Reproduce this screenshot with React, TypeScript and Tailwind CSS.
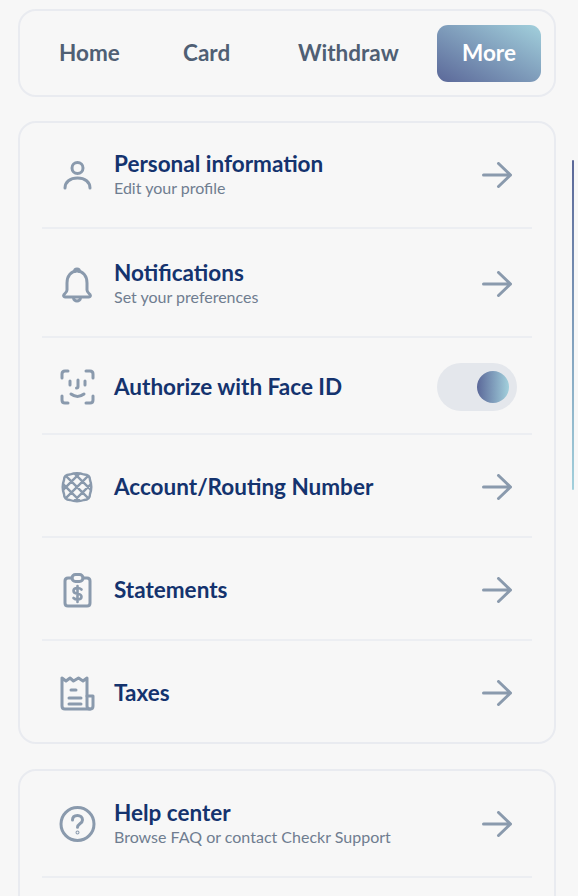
import type { ReactNode } from 'react';

const font = { fontFamily: 'Lato, "Noto Sans", sans-serif' };

function IconBox({ children }: { children: ReactNode }) {
  return (
    <svg width="40" height="40" viewBox="0 0 40 40" fill="none" stroke="#8a9aad" strokeWidth="3" strokeLinecap="round" strokeLinejoin="round">
      {children}
    </svg>
  );
}

const PersonIcon = () => (
  <IconBox>
    <circle cx="20.500" cy="13" r="5.500" />
    <path d="M8 33c0-6 5-10 12.500-10S33 27 33 33" />
  </IconBox>
);

const BellIcon = () => (
  <IconBox>
    <path d="M17.500 7.500c0-3.500 5-3.500 5 0" />
    <path d="M10 26V19c0-7 4-12 10-12s10 5 10 12v7c0 2 1.500 3 3 4.500 1 1.500 0 2.500-1 2.500H8c-1 0-2-1-1-2.500 1.500-1.500 3-2.500 3-4.500z" />
    <path d="M16.500 33.500c0 4.500 7 4.500 7 0" />
  </IconBox>
);

const FaceIcon = () => (
  <IconBox>
    <path d="M5 11V7c0-2 1-3 3-3h3M29 4h4c2 0 3 1 3 3v4M36 29v4c0 2-1 3-3 3h-4M11 36H8c-2 0-3-1-3-3v-4" />
    <path d="M13 14v4M28 14v4M21 13v6.500c0 1-.5 1.500-1.500 1.500" />
    <path d="M14 27c4 3 9 3 13 0" />
  </IconBox>
);

const gridOutline = 'M13 7.500c4-1.500 10-1.500 14 0 4 0 6 2 6 5.500 1.500 4 1.500 10 0 14 0 4-2 6-6 6-4 1.500-10 1.500-14 0-4 0-6-2-6-6-1.500-4-1.500-10 0-14 0-3.500 2-5.500 6-5.500z';

const GridIcon = () => (
  <svg width="40" height="40" viewBox="0 0 40 40" fill="none" stroke="#8a9aad" strokeWidth="2.400" strokeLinecap="round" strokeLinejoin="round">
    <defs>
      <clipPath id="grid-clip">
        <path d={gridOutline} />
      </clipPath>
    </defs>
    <path d={gridOutline} />
    <g clipPath="url(#grid-clip)">
      <path d="M0 0 40 40M11 0l29 29M0 11l29 29M40 0 0 40M29 0 0 29M40 11 11 40" />
    </g>
  </svg>
);

const StatementIcon = () => (
  <IconBox>
    <path d="M15 8h-4c-2 0-3 1-3 3v22c0 2 1 3 3 3h19c2 0 3-1 3-3V11c0-2-1-3-3-3h-4" />
    <rect x="15" y="4.500" width="11" height="7" rx="3.500" />
    <path d="M24.500 19.500c-1-1-2.500-1.500-4-1.500-2.500 0-4 1-4 2.800s1.500 2.700 4 3 4 1.200 4 3-1.500 2.700-4 2.700c-1.500 0-3-.5-4-1.500M20.500 16v16" strokeWidth="2.600" />
  </IconBox>
);

const TaxesIcon = () => (
  <IconBox>
    <path d="M5 5v28c0 2 1 3 3 3h25c2 0 3-1 3-3V23h-6V5l-4 3-4.500-3-5 3L13 5 9 8z" />
    <path d="M30 23v10c0 2 1 3 3 3" />
    <path d="M14 17h5M12 25h12M12 31h12" />
  </IconBox>
);

const HelpIcon = () => (
  <IconBox>
    <circle cx="20.500" cy="20" r="16.500" />
    <path d="M15.500 16c0-3 2.200-4.500 5-4.500s5 1.700 5 4.400c0 3.800-5 3.800-5 7.300" />
    <circle cx="20.500" cy="28.500" r="0.500" />
  </IconBox>
);

const Arrow = () => (
  <svg width="30" height="26" viewBox="0 0 30 26" fill="none" stroke="#8a9aad" strokeWidth="3" strokeLinecap="round" strokeLinejoin="round">
    <path d="M1.500 13h27M16.500 1.500 28.500 13 16.500 24.500" />
  </svg>
);

function Row({ icon, title, sub, h, right, line = true }: { icon: ReactNode; title: string; sub?: string; h: string; right?: ReactNode; line?: boolean }) {
  return (
    <div className={`flex items-center mx-[22px] ${line ? 'border-b-2 border-[#eceef2]' : ''} ${h}`}>
      <div className="w-[72px] pl-[15px] flex items-center shrink-0">{icon}</div>
      <div className="flex-1">
        <div className="text-[22.500px] leading-[24px] font-bold text-[#14336e]">{title}</div>
        {sub && <div className="mt-[2px] text-[16px] leading-[20px] text-[#6f7d90]">{sub}</div>}
      </div>
      {right ?? <div className="pr-[20px] flex"><Arrow /></div>}
    </div>
  );
}

export default function App() {
  return (
    <div style={font} className="relative h-[896px] overflow-hidden bg-[#f7f7f7] pl-[18px] pr-[22px] pt-[9px]">
      <nav className="h-[88px] border-2 border-[#e9ebf0] rounded-[18px] flex items-center pl-[39px] text-[22.500px] font-bold text-[#4f5f74]">
        <span className="w-[124px]">Home</span>
        <span className="w-[115px]">Card</span>
        <span className="w-[139px]">Withdraw</span>
        <span className="w-[104px] h-[57px] rounded-[11px] flex items-center justify-center text-white bg-linear-to-tr/srgb from-[#5b6899] to-[#a2d0dc]">More</span>
      </nav>

      <section className="mt-[24px] h-[623px] border-2 border-[#e9ebf0] rounded-[18px]">
        <Row h="h-[106px]" icon={<PersonIcon />} title="Personal information" sub="Edit your profile" />
        <Row h="h-[109px] pt-[2px]" icon={<BellIcon />} title="Notifications" sub="Set your preferences" />
        <Row
          h="h-[97px] pt-[2px]"
          icon={<FaceIcon />}
          title="Authorize with Face ID"
          right={
            <div className="mr-[15px] w-[80px] h-[48px] rounded-full bg-[#e4e7ec] flex items-center justify-end pr-[8px]">
              <div className="w-[32px] h-[32px] rounded-full bg-linear-to-r/srgb from-[#5b6899] to-[#a2d0dc]" />
            </div>
          }
        />
        <Row h="h-[103px] pt-[2px]" icon={<GridIcon />} title="Account/Routing Number" />
        <Row h="h-[103px] pt-[2px]" icon={<StatementIcon />} title="Statements" />
        <Row h="h-[101px] pt-[2px]" line={false} icon={<TaxesIcon />} title="Taxes" />
      </section>

      <section className="mt-[25px] h-[200px] border-2 border-[#e9ebf0] rounded-[18px]">
        <Row h="h-[107px]" icon={<HelpIcon />} title="Help center" sub="Browse FAQ or contact Checkr Support" />
      </section>

      <div className="absolute right-[4px] top-[160px] w-[2px] h-[330px] rounded-full bg-linear-to-b/srgb from-[#5b6899] to-[#a2d0dc]" />
    </div>
  );
}
